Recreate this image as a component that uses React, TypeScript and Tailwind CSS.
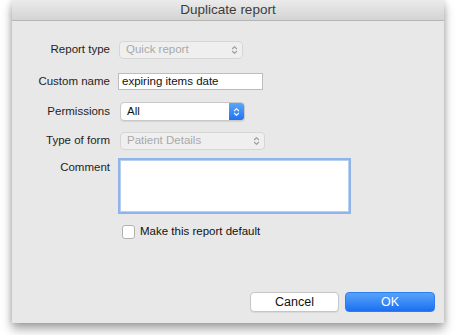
const font = { fontFamily: '"Liberation Sans", Arial, sans-serif' };

function Stepper({ className }: { className: string }) {
  return (
    <svg viewBox="0 0 8 12" className={className} fill="none" stroke="currentColor" strokeWidth="1.3" strokeLinecap="round" strokeLinejoin="round">
      <path d="M1.5 4.5 L4 2 L6.5 4.5" />
      <path d="M1.5 7.5 L4 10 L6.5 7.5" />
    </svg>
  );
}

function Row({ label, children, className = '' }: { label: string; children: React.ReactNode; className?: string }) {
  return (
    <div className={`flex items-center ${className}`}>
      <div className="w-[98px] text-right text-[11.5px] text-[#1e1e1e]">{label}</div>
      {children}
    </div>
  );
}

export default function App() {
  return (
    <div className="w-[456px] h-[335px] bg-white overflow-hidden" style={font}>
      <div className="ml-[12px] w-[432px] h-[323px] bg-[#e8e8e8] flex flex-col shadow-[0_6px_10px_rgba(0,0,0,0.35),0_0_6px_rgba(0,0,0,0.15)]">
        {/* Title bar */}
        <div className="h-[21px] shrink-0 flex items-center justify-center bg-gradient-to-b from-[#ebebeb] to-[#d4d4d4] border-b border-[#b5b5b5] text-[13.5px] text-[#3c3c3c]">
          Duplicate report
        </div>

        <Row label="Report type" className="mt-[20px] h-[18px]">
          <div className="ml-[9px] w-[124px] h-[18px] rounded-[4px] border border-[#d6d6d6] bg-[#efefef] flex items-center justify-between pl-[6px] pr-[4px] text-[11.5px] text-[#a9a9a9]">
            <span>Quick report</span>
            <Stepper className="w-[7px] h-[10px] text-[#9a9a9a]" />
          </div>
        </Row>

        <Row label="Custom name" className="mt-[14px] h-[17px]">
          <div className="ml-[8px] w-[145px] h-[17px] border border-[#bdbdbd] bg-white flex items-center pl-[3px] text-[11.5px] text-[#111]">
            expiring items date
          </div>
        </Row>

        <Row label="Permissions" className="mt-[12px] h-[19px]">
          <div className="ml-[10px] w-[125px] h-[19px] rounded-[4px] border border-[#c8c8c8] bg-white flex items-stretch overflow-hidden text-[11.5px] text-[#111] shadow-[0_1px_0_rgba(0,0,0,0.08)]">
            <span className="flex-1 flex items-center pl-[6px]">All</span>
            <div className="w-[15px] bg-gradient-to-b from-[#5aa6fb] to-[#1c74ee] flex items-center justify-center">
              <Stepper className="w-[7px] h-[10px] text-white" />
            </div>
          </div>
        </Row>

        <Row label="Type of form" className="mt-[11px] h-[18px]">
          <div className="ml-[10px] w-[145px] h-[18px] rounded-[4px] border border-[#d6d6d6] bg-[#efefef] flex items-center justify-between pl-[6px] pr-[4px] text-[11.5px] text-[#a9a9a9]">
            <span>Patient Details</span>
            <Stepper className="w-[7px] h-[10px] text-[#9a9a9a]" />
          </div>
        </Row>

        <div className="flex items-start mt-[8px]">
          <div className="w-[98px] text-right text-[11.5px] text-[#1e1e1e] pt-[1px]">Comment</div>
          <div className="ml-[8px] w-[233px] h-[56px] bg-white border-[2px] border-[#8fb4ea] shadow-[inset_0_0_0_1px_#b9cff0]" />
        </div>

        <div className="flex items-center mt-[9px] ml-[110px]">
          <div className="w-[13px] h-[14px] rounded-[3px] border border-[#b3b3b3] bg-white" />
          <span className="ml-[5px] text-[11.5px] text-[#111]">Make this report default</span>
        </div>

        <div className="flex-1" />
        <div className="flex justify-end gap-[6px] pr-[9px] pb-[11px]">
          <button className="w-[89px] h-[20px] rounded-[4px] border border-[#c5c5c5] bg-white text-[12.5px] text-[#111] shadow-[0_1px_0_rgba(0,0,0,0.06)]">
            Cancel
          </button>
          <button className="w-[90px] h-[20px] rounded-[4px] bg-gradient-to-b from-[#57a3fa] to-[#1b6ff0] border border-[#2d7ef0] text-[12.5px] text-white">
            OK
          </button>
        </div>
      </div>
    </div>
  );
}
